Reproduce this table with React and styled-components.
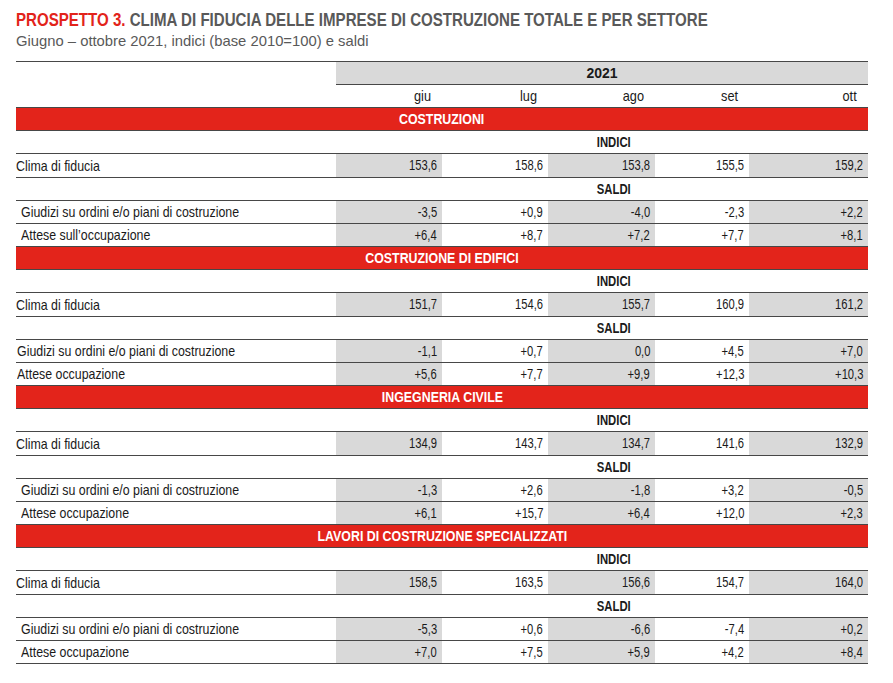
import React from 'react';
import styled, {createGlobalStyle} from 'styled-components';

// no narrow face is installed, so condensed text is Liberation Sans squeezed horizontally
const FONT = '"Liberation Sans", Arial, sans-serif';

const GlobalStyle = createGlobalStyle`
  html, body {
    margin: 0;
    padding: 0;
    background: #fff;
  }
  body {
    font-family: ${FONT};
    color: #1a1a1a;
  }
`;

const COLS = '320px 106px 106px 107px 94px 119px';
const MONTHS = ['giu', 'lug', 'ago', 'set', 'ott'];
const LINE = '1px solid #474747';

const SECTIONS = [
  {
    title: 'COSTRUZIONI',
    clima: ['153,6', '158,6', '153,8', '155,5', '159,2'],
    indent: 5,
    saldi: [
      {label: 'Giudizi su ordini e/o piani di costruzione', values: ['-3,5', '+0,9', '-4,0', '-2,3', '+2,2']},
      {label: 'Attese sull\u2019occupazione', values: ['+6,4', '+8,7', '+7,2', '+7,7', '+8,1']}
    ]
  },
  {
    title: 'COSTRUZIONE DI EDIFICI',
    clima: ['151,7', '154,6', '155,7', '160,9', '161,2'],
    indent: 1,
    saldi: [
      {label: 'Giudizi su ordini e/o piani di costruzione', values: ['-1,1', '+0,7', '0,0', '+4,5', '+7,0']},
      {label: 'Attese occupazione', values: ['+5,6', '+7,7', '+9,9', '+12,3', '+10,3']}
    ]
  },
  {
    title: 'INGEGNERIA CIVILE',
    clima: ['134,9', '143,7', '134,7', '141,6', '132,9'],
    indent: 5,
    saldi: [
      {label: 'Giudizi su ordini e/o piani di costruzione', values: ['-1,3', '+2,6', '-1,8', '+3,2', '-0,5']},
      {label: 'Attese occupazione', values: ['+6,1', '+15,7', '+6,4', '+12,0', '+2,3']}
    ]
  },
  {
    title: 'LAVORI DI COSTRUZIONE SPECIALIZZATI',
    clima: ['158,5', '163,5', '156,6', '154,7', '164,0'],
    indent: 5,
    saldi: [
      {label: 'Giudizi su ordini e/o piani di costruzione', values: ['-5,3', '+0,6', '-6,6', '-7,4', '+0,2']},
      {label: 'Attese occupazione', values: ['+7,0', '+7,5', '+5,9', '+4,2', '+8,4']}
    ]
  }
];

const Page = styled.div`
  padding: 10px 25px 20px 16px;
  width: 852px;
`;

const Squeeze = styled.span`
  display: inline-block;
  white-space: nowrap;
  transform: scaleX(${p => p.$scale || 0.825});
  transform-origin: ${p => p.$origin || 'left'} center;
`;

const Title = styled.h1`
  margin: 0;
  font-size: 18px;
  line-height: 21.6px;
  font-weight: 700;
  color: #595959;
`;

const Red = styled.span`
  color: #e2231a;
`;

const Subtitle = styled.div`
  font-size: 14.8px;
  line-height: 18px;
  color: #595959;
`;

const Table = styled.div`
  margin-top: 11px;
  border-top: ${LINE};
  font-size: 15px;
`;

const Row = styled.div`
  display: grid;
  grid-template-columns: ${COLS};
  height: ${p => (p.$tall ? 24 : 23)}px;
  box-sizing: border-box;
  border-bottom: ${p => (p.$noLine ? 'none' : LINE)};
`;

const YearLabel = styled.div`
  grid-column: 2 / 7;
  background: #d9d9d9;
  border-bottom: ${LINE};
  font-weight: 700;
  font-size: 14px;
  display: flex;
  align-items: center;
  justify-content: center;
`;

const Month = styled.div`
  display: flex;
  align-items: center;
  justify-content: flex-end;
  padding-right: 11px;
`;

const SectionBar = styled.div`
  grid-column: 1 / 7;
  background: #e3241b;
  color: #fff;
  font-weight: 700;
  font-size: 15px;
  display: flex;
  align-items: center;
  justify-content: center;
`;

const GroupLabel = styled.div`
  grid-column: 2 / 7;
  padding-left: 24px;
  font-weight: 700;
  font-size: 14.5px;
  display: flex;
  align-items: center;
  justify-content: center;
`;

const Label = styled.div`
  display: flex;
  align-items: center;
  padding-left: ${p => p.$indent || 0}px;
`;

const Value = styled.div`
  display: flex;
  align-items: center;
  justify-content: flex-end;
  padding-right: 5px;
  font-size: 14px;
  background: ${p => (p.$shaded ? '#d9d9d9' : 'transparent')};
`;

const Values = ({values}) =>
  values.map((v, i) => (
    <Value key={i} $shaded={i % 2 === 0}>
      <Squeeze $scale={0.8} $origin="right">{v}</Squeeze>
    </Value>
  ));

const Section = ({section}) => (
  <>
    <Row>
      <SectionBar><Squeeze $origin="center">{section.title}</Squeeze></SectionBar>
    </Row>
    <Row>
      <GroupLabel><Squeeze $scale={0.78} $origin="center">INDICI</Squeeze></GroupLabel>
    </Row>
    <Row $tall>
      <Label><Squeeze>Clima di fiducia</Squeeze></Label>
      <Values values={section.clima}/>
    </Row>
    <Row>
      <GroupLabel><Squeeze $scale={0.78} $origin="center">SALDI</Squeeze></GroupLabel>
    </Row>
    {section.saldi.map(r => (
      <Row key={r.label}>
        <Label $indent={section.indent}><Squeeze>{r.label}</Squeeze></Label>
        <Values values={r.values}/>
      </Row>
    ))}
  </>
);

export default function App() {
  return (
    <Page>
      <GlobalStyle/>
      <Title>
        <Squeeze $scale={0.838}>
          <Red>PROSPETTO 3.</Red> CLIMA DI FIDUCIA DELLE IMPRESE DI COSTRUZIONE TOTALE E PER SETTORE
        </Squeeze>
      </Title>
      <Subtitle>Giugno – ottobre 2021, indici (base 2010=100) e saldi</Subtitle>
      <Table>
        <Row $noLine>
          <YearLabel>2021</YearLabel>
        </Row>
        <Row>
          <div/>
          {MONTHS.map(m => (
            <Month key={m}><Squeeze $scale={0.85} $origin="right">{m}</Squeeze></Month>
          ))}
        </Row>
        {SECTIONS.map(s => <Section key={s.title} section={s}/>)}
      </Table>
    </Page>
  );
}
